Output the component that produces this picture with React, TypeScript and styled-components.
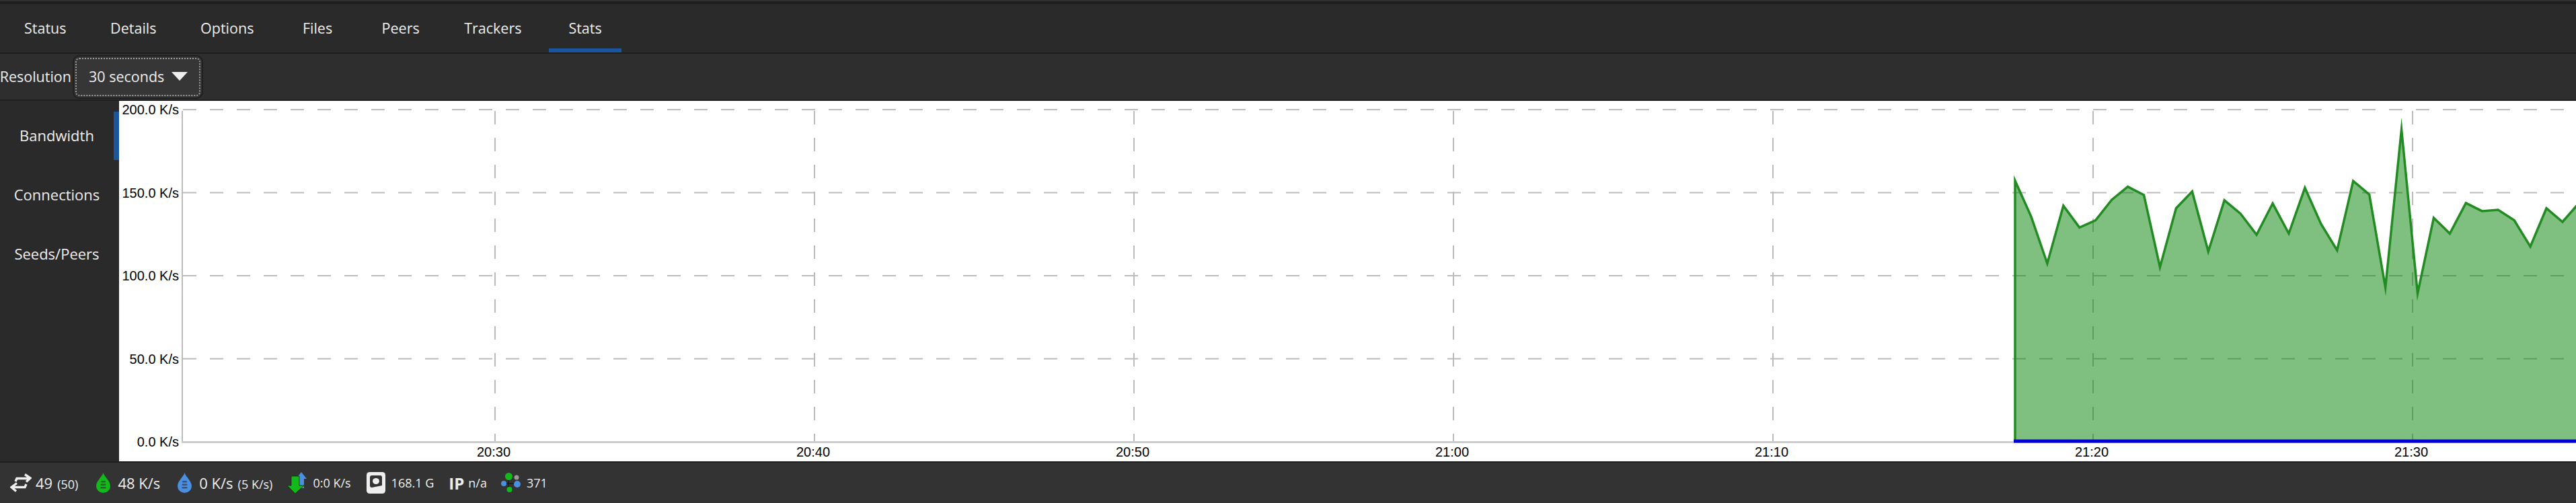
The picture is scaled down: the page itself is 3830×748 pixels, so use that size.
import React from 'react';
import styled, { createGlobalStyle } from 'styled-components';

const GlobalStyle = createGlobalStyle`
	html, body {
		margin: 0;
		padding: 0;
		background-color: #1e1e1e;
		overflow: hidden;
	}
`;

const Page = styled.div`
	width: 3830px;
	height: 748px;
	display: flex;
	flex-direction: column;
	overflow: hidden;
	font-family: 'Open Sans', 'Noto Sans', sans-serif;
	color: #eeeeee;
	background-color: #1e1e1e;
`;

const TopStrip = styled.div`
	height: 2px;
	margin-bottom: 4px;
	background-color: #2f2f2f;
`;

const TabBar = styled.div`
	height: 72px;
	display: flex;
	gap: 15.6px;
	padding-left: 11px;
	background-color: #2a2a2a;
`;

const Tab = styled.div<{ $active?: boolean }>`
	height: 72px;
	min-width: 108px;
	box-sizing: border-box;
	padding: 4px 25px 0;
	display: flex;
	align-items: center;
	justify-content: center;
	font-size: 21.5px;
	border-bottom: 6px solid ${(p) => (p.$active ? '#1a56a0' : 'transparent')};
`;

const ToolBar = styled.div`
	height: 68px;
	margin-top: 2px;
	display: flex;
	align-items: center;
	gap: 2px;
	background-color: #2e2e2e;
`;

const ToolLabel = styled.div`
	width: 106px;
	flex-shrink: 0;
	padding-bottom: 2px;
	display: flex;
	justify-content: flex-end;
	font-size: 21.5px;
	white-space: nowrap;
`;

const Dropdown = styled.div`
	width: 194px;
	height: 65px;
	flex-shrink: 0;
	box-sizing: border-box;
	padding: 0 0 2px 22px;
	display: flex;
	align-items: center;
	gap: 11px;
	font-size: 21.5px;
	white-space: nowrap;
	background-color: #363636;
	border: 2px solid #202020;
	border-radius: 10px;
	outline: 2px dotted #9a9a9a;
	outline-offset: -6px;
`;

const Caret = styled.div`
	width: 0;
	height: 0;
	border-left: 12px solid transparent;
	border-right: 12px solid transparent;
	border-top: 13px solid #eeeeee;
`;

const Main = styled.div`
	height: 536px;
	margin-top: 2px;
	display: flex;
`;

const SideBar = styled.div`
	width: 177px;
	box-sizing: border-box;
	padding-top: 16px;
	display: flex;
	flex-direction: column;
	gap: 16px;
	background-color: #2a2a2a;
`;

const SideItem = styled.div<{ $active?: boolean }>`
	height: 72px;
	box-sizing: border-box;
	padding-bottom: 3px;
	display: flex;
	align-items: center;
	justify-content: center;
	font-size: 22px;
	border-right: 8px solid ${(p) => (p.$active ? '#1a56a0' : 'transparent')};
`;

const ChartPane = styled.div`
	flex: 1;
	background-color: #ffffff;
`;

const ChartSvg = styled.svg`
	display: block;
	font-family: 'Liberation Sans', Arial, sans-serif;
	font-size: 20px;
	fill: #000000;
`;

const StatusBar = styled.div`
	height: 60px;
	margin-top: 2px;
	box-sizing: border-box;
	padding-left: 15px;
	display: flex;
	align-items: center;
	background-color: #333333;
`;

const StatusItem = styled.div<{ $gap: number; $after: number }>`
	display: flex;
	align-items: center;
	gap: ${(p) => p.$gap}px;
	margin-right: ${(p) => p.$after}px;
	font-size: 22px;
	white-space: nowrap;
`;

const Small = styled.span`
	margin-left: 7px;
	font-size: 18px;
`;

const SmallValue = styled.span`
	font-size: 18px;
`;

const IpTag = styled.span`
	font-size: 24px;
	font-weight: 700;
`;

// K/s, one sample every 30 seconds
const samples = [
	157.2, 135.6, 107.4, 142.1, 129, 133.4, 145.7, 153.6, 148.6, 105.2, 140.6, 150.7,
	114.6, 145.4, 137.4, 124.7, 143.5, 125.4, 152.9, 131.2, 115.3, 157, 148.9, 92.9,
	188, 89.3, 134.8, 125.4, 143.8, 138.9, 139.7, 133.4, 117.5, 140.6, 132.4, 143.5,
];

const CHART_W = 3653;
const CHART_H = 536;
const LEFT = 94;
const RIGHT = 3635;
const TOP = 13;
const BASE = 507;
const FIRST_X = 2819;
const STEP_X = 23.94;

const yFor = (value: number) => BASE - (value / 200) * (BASE - TOP);

const yTicks = [200, 150, 100, 50, 0];
const xTicks = [
	{ x: 559, label: '20:30' },
	{ x: 1034, label: '20:40' },
	{ x: 1509, label: '20:50' },
	{ x: 1984, label: '21:00' },
	{ x: 2459, label: '21:10' },
	{ x: 2935, label: '21:20' },
	{ x: 3410, label: '21:30' },
];

const linePoints = samples.map((v, i) => `${FIRST_X + i * STEP_X},${yFor(v)}`).join(' ');
const lastX = FIRST_X + (samples.length - 1) * STEP_X;

const Chart = () => (
	<ChartSvg width={CHART_W} height={CHART_H} viewBox={`0 0 ${CHART_W} ${CHART_H}`}>
		{yTicks.map((t) => (
			<g key={t}>
				<text x={89} y={yFor(t) + 7} textAnchor="end">
					{t.toFixed(1)} K/s
				</text>
				{t > 0 && (
					<line
						x1={LEFT + 1}
						x2={RIGHT}
						y1={yFor(t)}
						y2={yFor(t)}
						stroke="#bbbbbb"
						strokeWidth={2}
						strokeDasharray="20 20"
					/>
				)}
			</g>
		))}
		{xTicks.map((t) => (
			<g key={t.label}>
				<line
					x1={t.x}
					x2={t.x}
					y1={15}
					y2={BASE}
					stroke="#bbbbbb"
					strokeWidth={2}
					strokeDasharray="20 20"
				/>
				<text x={t.x - 2} y={529} textAnchor="middle">
					{t.label}
				</text>
			</g>
		))}
		<rect x={LEFT - 1} y={15} width={2} height={BASE - 15} fill="#bbbbbb" />
		<rect x={LEFT - 1} y={BASE - 1} width={CHART_W - LEFT} height={3} fill="#cccccc" />

		<polygon
			points={`${FIRST_X},${BASE} ${linePoints} ${lastX},${BASE}`}
			fill="#008000"
			fillOpacity={0.5}
		/>
		<polyline
			points={`${FIRST_X},${BASE} ${linePoints}`}
			fill="none"
			stroke="#228b22"
			strokeWidth={3.5}
			strokeMiterlimit={20}
		/>
		<line x1={FIRST_X - 2} x2={CHART_W} y1={BASE - 1} y2={BASE - 1} stroke="#0000dd" strokeWidth={5} />
	</ChartSvg>
);

const ArrowsIcon = () => (
	<svg width="32" height="28" viewBox="0 0 32 28" fill="none" stroke="#eeeeee" strokeWidth="3.4">
		<path d="M8 12 L10 7.5 L29 7.5 M22 1.5 L30 7 L24 12.5" />
		<path d="M24 16 L22 20.5 L3 20.5 M10 14.5 L2 20.5 L9 26.5" />
	</svg>
);

const DropIcon = ({ color }: { color: string }) => (
	<svg width="21" height="30" viewBox="0 0 21 30">
		<path d="M10.5 0 C12 6 21 12 21 20 A10.5 10 0 0 1 0 20 C0 12 9 6 10.5 0 Z" fill={color} />
		<rect x="7" y="12" width="7" height="2.5" rx="1.2" fill="#333333" opacity="0.65" />
		<rect x="6.5" y="16.5" width="8" height="2.5" rx="1.2" fill="#333333" opacity="0.65" />
		<rect x="6.5" y="21" width="8" height="2.5" rx="1.2" fill="#333333" opacity="0.65" />
	</svg>
);

const UpDownIcon = () => (
	<svg width="30" height="32" viewBox="0 0 30 32">
		<path d="M21 0 L29 10 L25 10 L25 24 L17 24 L17 10 L13 10 Z" fill="#4a8fe0" />
		<path d="M6 6 L18 6 L18 20 L25 20 L12 32 L0 20 L6 20 Z" fill="#11b91a" stroke="#222222" strokeWidth="0.8" />
	</svg>
);

const DiskIcon = () => (
	<svg width="28" height="32" viewBox="0 0 28 32">
		<rect x="0" y="0" width="28" height="32" rx="4.5" fill="#eeeeee" />
		<path d="M8 5 L20 5 A3 3 0 0 1 23 8 L23 20 L8 23 A3 3 0 0 1 5 20 L5 8 A3 3 0 0 1 8 5 Z" fill="#333333" />
		<ellipse cx="14" cy="13.5" rx="5" ry="4.5" fill="#eeeeee" />
	</svg>
);

const PeersIcon = () => (
	<svg width="29" height="30" viewBox="0 0 29 30">
		<path d="M11 6 L11 25 M3 16 L24 16" stroke="#1e1e1e" strokeWidth="2" />
		<circle cx="11.5" cy="5.5" r="5.5" fill="#11b91a" />
		<circle cx="23" cy="7" r="3.5" fill="#9a9a9a" />
		<circle cx="4" cy="16" r="4" fill="#4a8fe0" />
		<circle cx="24" cy="17" r="5" fill="#4a8fe0" />
		<circle cx="12.5" cy="25" r="4" fill="#11b91a" />
	</svg>
);

const tabs = ['Status', 'Details', 'Options', 'Files', 'Peers', 'Trackers', 'Stats'];
const graphs = ['Bandwidth', 'Connections', 'Seeds/Peers'];

export default function App() {
	return (
		<>
			<GlobalStyle />
			<Page>
				<TopStrip />
				<TabBar>
					{tabs.map((name) => (
						<Tab key={name} $active={name === 'Stats'}>
							{name}
						</Tab>
					))}
				</TabBar>
				<ToolBar>
					<ToolLabel>Resolution</ToolLabel>
					<Dropdown>
						30 seconds
						<Caret />
					</Dropdown>
				</ToolBar>
				<Main>
					<SideBar>
						{graphs.map((name) => (
							<SideItem key={name} $active={name === 'Bandwidth'}>
								{name}
							</SideItem>
						))}
					</SideBar>
					<ChartPane>
						<Chart />
					</ChartPane>
				</Main>
				<StatusBar>
					<StatusItem $gap={6} $after={27}>
						<ArrowsIcon />
						<span>
							49<Small>(50)</Small>
						</span>
					</StatusItem>
					<StatusItem $gap={11} $after={26}>
						<DropIcon color="#11b91a" />
						<span>48 K/s</span>
					</StatusItem>
					<StatusItem $gap={11} $after={22}>
						<DropIcon color="#4a8fe0" />
						<span>
							0 K/s<Small>(5 K/s)</Small>
						</span>
					</StatusItem>
					<StatusItem $gap={8} $after={23}>
						<UpDownIcon />
						<SmallValue>0:0 K/s</SmallValue>
					</StatusItem>
					<StatusItem $gap={9} $after={22}>
						<DiskIcon />
						<SmallValue>168.1 G</SmallValue>
					</StatusItem>
					<StatusItem $gap={6} $after={21}>
						<IpTag>IP</IpTag>
						<SmallValue>n/a</SmallValue>
					</StatusItem>
					<StatusItem $gap={9} $after={0}>
						<PeersIcon />
						<SmallValue>371</SmallValue>
					</StatusItem>
				</StatusBar>
			</Page>
		</>
	);
}
